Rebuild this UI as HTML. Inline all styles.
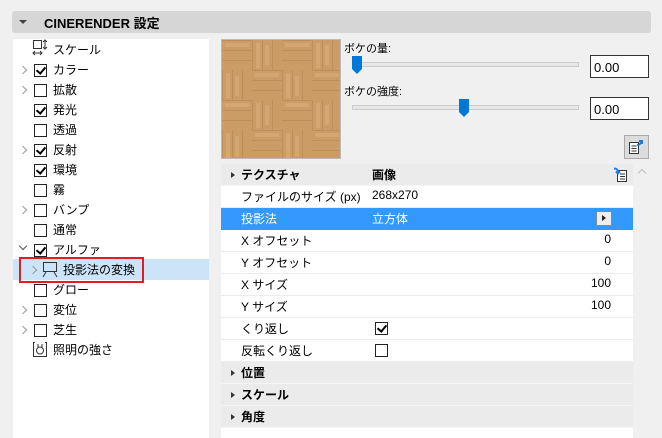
<!DOCTYPE html>
<html><head><meta charset="utf-8"><style>
body{margin:0;width:662px;height:438px;background:#f0f0f0;font-family:"Liberation Sans","Noto Sans CJK JP",sans-serif;font-size:12px;color:#000;position:relative;overflow:hidden}
.abs{position:absolute}
.hdr{left:12px;top:11px;width:639px;height:22px;background:#d6d6d6;border-radius:3px}
.hdr span{position:absolute;left:32px;top:2px;font-weight:bold;font-size:13px}
.tri{position:absolute;width:0;height:0}
.left{left:13px;top:39px;width:196px;height:399px;background:#fff}
.ti{position:absolute;left:53px;font-size:12px;line-height:16px}
.cb{position:absolute;left:34px;width:11px;height:11px;border:1px solid #222;background:#fff}
.cb.c::after{content:"";position:absolute;left:3px;top:0px;width:4px;height:7px;border:solid #000;border-width:0 2px 2px 0;transform:rotate(40deg)}
.chev{position:absolute;left:20px;width:5px;height:5px;border:solid #999;border-width:1.5px 1.5px 0 0;transform:rotate(45deg)}
.row{position:absolute;left:221px;width:412px;height:21px;background:#fff;border-bottom:1px solid #ececec}
.row .a{position:absolute;left:20px;top:2px}
.row .b{position:absolute;left:151px;top:2px}
.row .r{position:absolute;right:22px;top:2px}
.grp{background:#ebebeb;border-bottom:1px solid #f4f4f4}
.grp .a{font-weight:bold}
.gt{position:absolute;left:10px;top:8px;border-left:4px solid #333;border-top:3.5px solid transparent;border-bottom:3.5px solid transparent}
.inp{position:absolute;left:590px;width:59px;height:23px;background:#fff;border:1px solid #333;font-size:13px;box-sizing:border-box;padding:4px 0 0 3px}
.track{position:absolute;left:352px;width:225px;height:3px;background:#e6e6e6;border:1px solid #ccc}
.thumb{position:absolute;width:10px;height:13px;background:#0078d7}
.thumb::after{content:"";position:absolute;top:13px;left:0;border-top:5px solid #0078d7;border-left:5px solid transparent;border-right:5px solid transparent}
</style></head><body>
<div class="abs hdr"><div class="tri" style="left:7px;top:9px;border-top:4px solid #444;border-left:4px solid transparent;border-right:4px solid transparent"></div><span>CINERENDER 設定</span></div>
<div class="abs left"></div>
<div class="abs" style="left:13px;top:259px;width:196px;height:21px;background:#cce4f7"></div>
<div class="abs" style="left:19px;top:257px;width:121px;height:22px;border:2px solid #e02020"></div>
<svg class="abs" style="left:31px;top:38px" width="18" height="18" viewBox="0 0 18 18"><rect x="2.5" y="2.5" width="8" height="8" fill="none" stroke="#333"/><path d="M14 2v9M12 4l2-2 2 2M12 9l2 2 2-2M2 15h9M4 13l-2 2 2 2M9 13l2 2-2 2" stroke="#333" fill="none"/></svg>
<div class="ti" style="top:42px">スケール</div>
<div class="chev" style="top:67px"></div><div class="cb c" style="top:64px"></div><div class="ti" style="top:62px">カラー</div>
<div class="chev" style="top:87px"></div><div class="cb" style="top:84px"></div><div class="ti" style="top:82px">拡散</div>
<div class="cb c" style="top:104px"></div><div class="ti" style="top:102px">発光</div>
<div class="cb" style="top:124px"></div><div class="ti" style="top:122px">透過</div>
<div class="chev" style="top:147px"></div><div class="cb c" style="top:144px"></div><div class="ti" style="top:142px">反射</div>
<div class="cb c" style="top:164px"></div><div class="ti" style="top:162px">環境</div>
<div class="cb" style="top:184px"></div><div class="ti" style="top:182px">霧</div>
<div class="chev" style="top:207px"></div><div class="cb" style="top:204px"></div><div class="ti" style="top:202px">バンプ</div>
<div class="cb" style="top:224px"></div><div class="ti" style="top:222px">通常</div>
<div class="chev" style="top:243px;transform:rotate(135deg);border-color:#555"></div><div class="cb c" style="top:244px"></div><div class="ti" style="top:242px">アルファ</div>
<div class="chev" style="top:267px;left:30px"></div>
<svg class="abs" style="left:42px;top:261px" width="16" height="17" viewBox="0 0 16 17"><rect x="1.5" y="1.5" width="13" height="9" fill="none" stroke="#333"/><path d="M4 11l-3 5M12 11l3 5" stroke="#333"/></svg>
<div class="ti" style="top:262px;left:63px">投影法の変換</div>
<div class="cb" style="top:284px"></div><div class="ti" style="top:282px">グロー</div>
<div class="chev" style="top:307px"></div><div class="cb" style="top:304px"></div><div class="ti" style="top:302px">変位</div>
<div class="chev" style="top:327px"></div><div class="cb" style="top:324px"></div><div class="ti" style="top:322px">芝生</div>
<svg class="abs" style="left:32px;top:341px" width="16" height="17" viewBox="0 0 16 17"><path d="M3 1.5H1.5v14h13v-14H13" fill="none" stroke="#333"/><circle cx="8" cy="9.5" r="3.5" fill="none" stroke="#333"/><path d="M6 3v3M10 3v3" stroke="#333"/></svg>
<div class="ti" style="top:342px">照明の強さ</div>
<svg class="abs" style="left:221px;top:39px;border:1px solid #bbb" width="118" height="118">
<defs><pattern id="p" width="60" height="60" patternUnits="userSpaceOnUse">
<rect width="60" height="60" fill="#cc9c66"/>
<g fill="#b88a58" opacity=".7"><rect x="0" y="0" width="30" height="1"/><rect x="0" y="10" width="30" height="1"/><rect x="0" y="20" width="30" height="1"/>
<rect x="30" y="30" width="30" height="1"/><rect x="30" y="40" width="30" height="1"/><rect x="30" y="50" width="30" height="1"/>
<rect x="30" y="0" width="1" height="30"/><rect x="40" y="0" width="1" height="30"/><rect x="50" y="0" width="1" height="30"/>
<rect x="0" y="30" width="1" height="30"/><rect x="10" y="30" width="1" height="30"/><rect x="20" y="30" width="1" height="30"/></g>
<g fill="#d9ad78" opacity=".6"><rect x="3" y="3" width="24" height="4"/><rect x="33" y="33" width="24" height="4"/><rect x="34" y="3" width="4" height="25"/><rect x="4" y="33" width="4" height="25"/><rect x="43" y="5" width="4" height="20"/><rect x="5" y="44" width="20" height="4" transform="rotate(90 15 46)"/></g>
</pattern></defs><rect width="118" height="118" fill="url(#p)"/></svg>
<div class="abs" style="left:344px;top:40px;font-size:11px">ボケの量:</div>
<div class="track" style="top:62px"></div><div class="thumb" style="left:352px;top:56px"></div>
<div class="inp" style="top:55px">0.00</div>
<div class="abs" style="left:344px;top:83px;font-size:11px">ボケの強度:</div>
<div class="track" style="top:105px"></div><div class="thumb" style="left:459px;top:99px"></div>
<div class="inp" style="top:97px">0.00</div>
<div class="abs" style="left:624px;top:135px;width:23px;height:22px;background:#dcdcdc;border:1px solid #aaa"></div>
<svg class="abs" style="left:628px;top:138px" width="17" height="17" viewBox="0 0 17 17"><rect x="1.5" y="4.5" width="9" height="11" fill="#fff" stroke="#333"/><path d="M3.5 8h5M3.5 10.5h5M3.5 13h5" stroke="#333"/><path d="M9 7c2 0 4-1 4-4M11 3h3v3" stroke="#1f7ae0" stroke-width="2" fill="none"/></svg>
<div class="row grp" style="top:164px"><div class="gt"></div><div class="a">テクスチャ</div><div class="b" style="font-weight:bold">画像</div>
<svg style="position:absolute;left:392px;top:3px" width="15" height="15" viewBox="0 0 15 15"><rect x="4.5" y="3.5" width="9" height="11" fill="#fff" stroke="#333"/><path d="M7 7h5M7 9.5h5M7 12h5" stroke="#333"/><path d="M1 1.5c3 0 4 1 4 4M3 4.5l2 2 2-2" stroke="#1f7ae0" stroke-width="2" fill="none"/></svg></div>
<div class="row" style="top:186px"><div class="a">ファイルのサイズ (px)</div><div class="b">268x270</div></div>
<div class="row" style="top:208px;background:#3399ff;color:#fff;border-bottom-color:#3399ff"><div class="a">投影法</div><div class="b">立方体</div>
<div style="position:absolute;left:375px;top:3px;width:14px;height:13px;background:#eee;border:1px solid #888"><div style="position:absolute;left:5px;top:3px;border-left:4px solid #222;border-top:3.5px solid transparent;border-bottom:3.5px solid transparent"></div></div></div>
<div class="row" style="top:230px"><div class="a">X オフセット</div><div class="r">0</div></div>
<div class="row" style="top:252px"><div class="a">Y オフセット</div><div class="r">0</div></div>
<div class="row" style="top:274px"><div class="a">X サイズ</div><div class="r">100</div></div>
<div class="row" style="top:296px"><div class="a">Y サイズ</div><div class="r">100</div></div>
<div class="row" style="top:318px"><div class="a">くり返し</div><div class="cb c" style="left:154px;top:4px"></div></div>
<div class="row" style="top:340px"><div class="a">反転くり返し</div><div class="cb" style="left:154px;top:4px"></div></div>
<div class="row grp" style="top:362px"><div class="gt"></div><div class="a">位置</div></div>
<div class="row grp" style="top:384px"><div class="gt"></div><div class="a">スケール</div></div>
<div class="row grp" style="top:406px"><div class="gt"></div><div class="a">角度</div></div>
<div class="abs" style="left:221px;top:428px;width:412px;height:10px;background:#fff"></div>
<div class="abs" style="left:633px;top:164px;width:18px;height:274px;background:#f0f0f0"></div>
<div class="abs" style="left:639px;top:170px;width:5px;height:5px;border:solid #bbb;border-width:1.5px 0 0 1.5px;transform:rotate(45deg)"></div>
</body></html>
